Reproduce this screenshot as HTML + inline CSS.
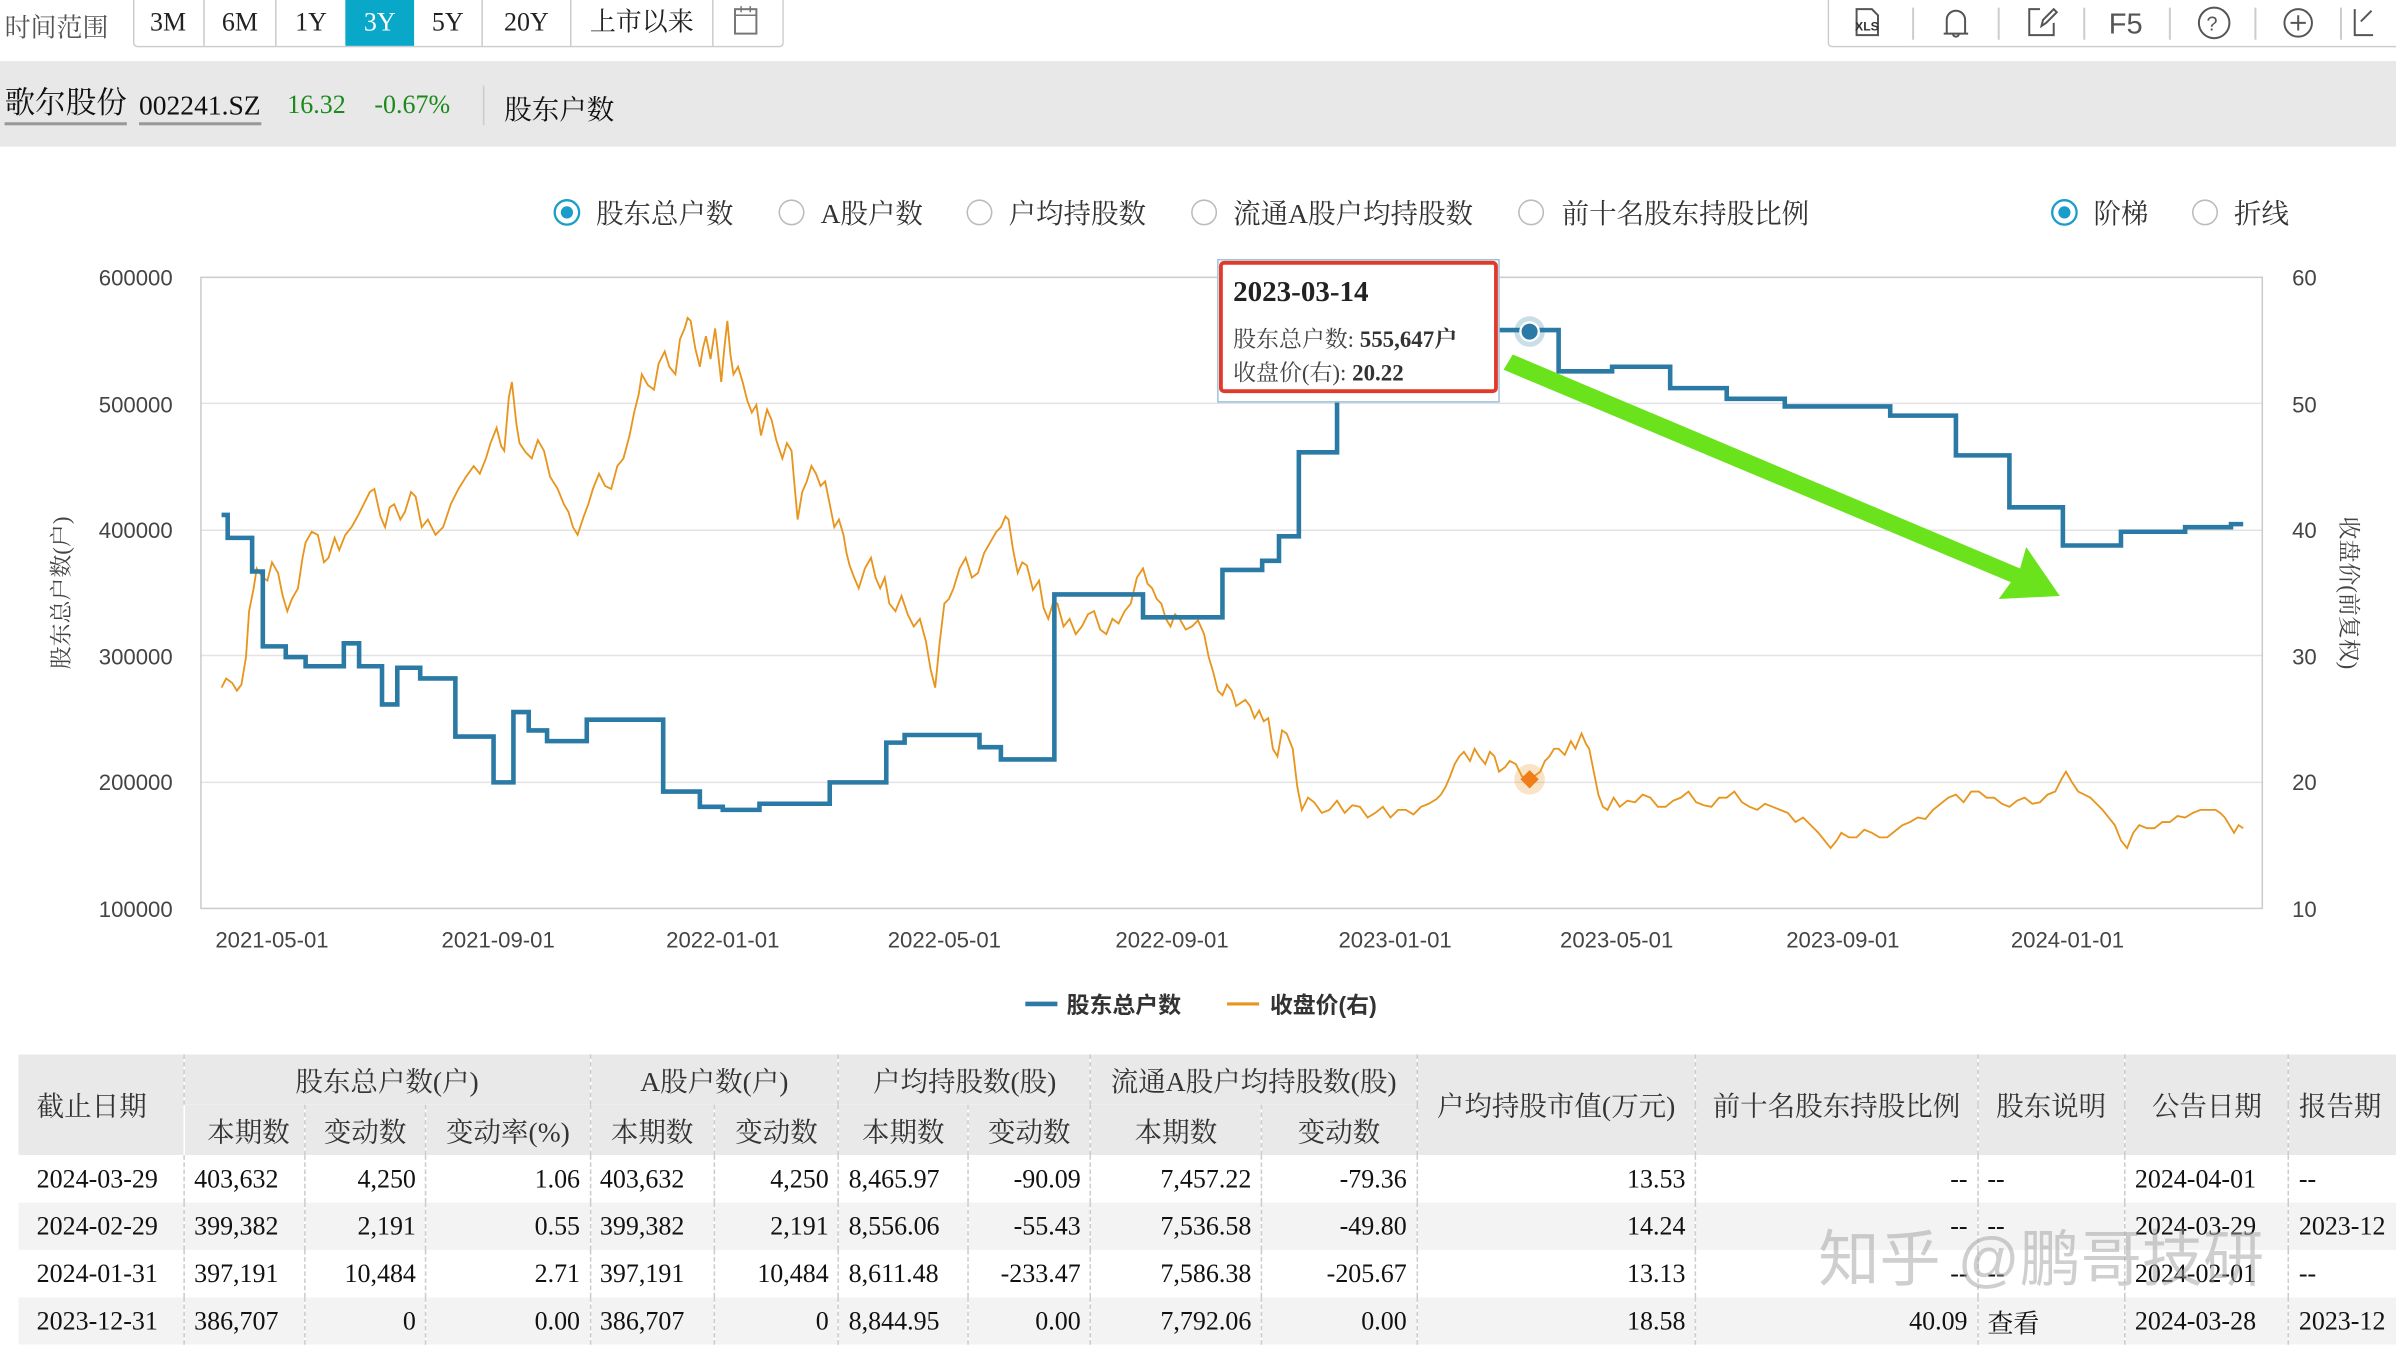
<!DOCTYPE html>
<html><head><meta charset="utf-8"><style>
html,body{margin:0;padding:0;background:#fff;overflow:hidden}
#w{position:absolute;left:0;top:0;width:1568px;height:876px;transform:scale(1.52806);transform-origin:0 0;font-family:"Liberation Serif","Noto Serif CJK SC",serif;color:#222}
.a{position:absolute;white-space:nowrap}
table{position:absolute;left:12px;top:690px;border-collapse:collapse;font-size:17px;table-layout:fixed;color:#111}
td{height:31px;padding:0 6px;border-left:1px dashed #ccc;white-space:nowrap;overflow:hidden}
td:first-child{border-left:none;padding-left:12px}
.h td{background:#e9e9e9;text-align:center;height:33px;font-size:18px;color:#333}
.r{text-align:right}
.g td{background:#f3f3f3}
</style></head><body><div id="w">
<div class="a" style="left:3px;top:4px;font-size:17px;color:#555">时间范围</div>
<div style="position:absolute;left:87px;top:0;width:424px;height:30px;border:1px solid #ccc;border-top:none;border-radius:0 0 3px 3px"></div>
<div class="a" style="left:87px;top:0;width:424px;height:30px;font-size:17px;line-height:30px">
<span class="a" style="left:0;width:46px;text-align:center">3M</span>
<span class="a" style="left:46px;width:46px;text-align:center;border-left:1px solid #ccc">6M</span>
<span class="a" style="left:93px;width:45px;text-align:center;border-left:1px solid #ccc">1Y</span>
<span class="a" style="left:139px;width:45px;text-align:center;background:#0aa8c8;color:#fff">3Y</span>
<span class="a" style="left:184px;width:44px;text-align:center">5Y</span>
<span class="a" style="left:228px;width:57px;text-align:center;border-left:1px solid #ccc">20Y</span>
<span class="a" style="left:286px;width:92px;text-align:center;border-left:1px solid #ccc">上市以来</span>
<span class="a" style="left:379px;width:44px;height:30px;border-left:1px solid #ccc"><svg width="44" height="30"><rect x="14" y="6" width="14" height="16" fill="none" stroke="#777" stroke-width="1.3"/><line x1="14" y1="10" x2="28" y2="10" stroke="#777"/><line x1="18" y1="4" x2="18" y2="8" stroke="#777"/><line x1="24" y1="4" x2="24" y2="8" stroke="#777"/></svg></span>
</div>
<div style="position:absolute;left:1196px;top:0;width:380px;height:30px;border:1px solid #ccc;border-top:none;border-radius:0 0 3px 3px"></div>
<svg class="a" style="left:1196px;top:0" width="372" height="30" fill="none" stroke="#555" stroke-width="1.3">
<path d="M19 6h10l4 4v13H19z"/><text x="18" y="20" font-size="8" font-family="Liberation Sans" fill="#333" stroke="none" font-weight="bold">XLS</text>
<line x1="56" y1="5" x2="56" y2="26" stroke="#ccc"/>
<path d="M78 22v-9a6 6 0 0 1 12 0v9zM76 22h16M82 22a2 2 0 0 0 4 0"/>
<line x1="112" y1="5" x2="112" y2="26" stroke="#ccc"/>
<path d="M139 6h-7v17h16v-8M140 17l1-4 7-7 2 2-7 7z"/>
<line x1="168" y1="5" x2="168" y2="26" stroke="#ccc"/>
<text x="184" y="22" font-size="19" font-family="Liberation Sans" fill="#555" stroke="none">F5</text>
<line x1="224" y1="5" x2="224" y2="26" stroke="#ccc"/>
<circle cx="253" cy="15" r="10"/><text x="248" y="20" font-size="13" font-family="Liberation Sans" fill="#555" stroke="none">?</text>
<line x1="280" y1="5" x2="280" y2="26" stroke="#ccc"/>
<circle cx="308" cy="15" r="9"/><path d="M308 10v10M303 15h10"/>
<line x1="336" y1="5" x2="336" y2="26" stroke="#ccc"/>
<path d="M345 6v17h12M349 14l7-7"/>
</svg>
<div style="position:absolute;left:0;top:40px;width:1568px;height:56px;background:#e8e8e8"></div>
<div class="a" style="left:3px;top:56px;font-size:20px;color:#111;border-bottom:2px solid #999;line-height:24px">歌尔股份</div>
<div class="a" style="left:91px;top:58px;font-size:18px;color:#111;border-bottom:2px solid #999;line-height:22px">002241.SZ</div>
<div class="a" style="left:188px;top:59px;font-size:17px;color:#1a8a1a">16.32</div>
<div class="a" style="left:245px;top:59px;font-size:17px;color:#1a8a1a">-0.67%</div>
<div style="position:absolute;left:316px;top:56px;width:1px;height:26px;background:#ccc"></div>
<div class="a" style="left:330px;top:58px;font-size:18px;color:#111">股东户数</div>
<svg class="a" style="left:0;top:100px" width="1568" height="580" font-family="Liberation Serif,Noto Serif CJK SC,serif">
<g font-size="18" fill="#333">
<circle cx="371" cy="39" r="8" fill="none" stroke="#1a9dc8" stroke-width="1.5"/><circle cx="371" cy="39" r="4" fill="#1a9dc8"/><text x="390" y="46">股东总户数</text>
<circle cx="518" cy="39" r="8" fill="none" stroke="#bbb"/><text x="537" y="46">A股户数</text>
<circle cx="641" cy="39" r="8" fill="none" stroke="#bbb"/><text x="660" y="46">户均持股数</text>
<circle cx="788" cy="39" r="8" fill="none" stroke="#bbb"/><text x="807" y="46">流通A股户均持股数</text>
<circle cx="1002" cy="39" r="8" fill="none" stroke="#bbb"/><text x="1022" y="46">前十名股东持股比例</text>
<circle cx="1351" cy="39" r="8" fill="none" stroke="#1a9dc8" stroke-width="1.5"/><circle cx="1351" cy="39" r="4" fill="#1a9dc8"/><text x="1370" y="46">阶梯</text>
<circle cx="1443" cy="39" r="8" fill="none" stroke="#bbb"/><text x="1462" y="46">折线</text>
</g>
<g transform="translate(0,-100)">
<g stroke="#e3e3e3" stroke-width="1"><line x1="131" y1="264" x2="1481" y2="264"/><line x1="131" y1="347" x2="1481" y2="347"/><line x1="131" y1="429" x2="1481" y2="429"/><line x1="131" y1="512" x2="1481" y2="512"/></g>
<rect x="131.5" y="181.5" width="1349" height="413" fill="none" stroke="#ccc"/>
<g font-family="Liberation Sans,sans-serif" font-size="14.5" fill="#444" text-anchor="end">
<text x="113" y="187">600000</text><text x="113" y="270">500000</text><text x="113" y="352">400000</text><text x="113" y="435">300000</text><text x="113" y="517">200000</text><text x="113" y="600">100000</text></g>
<g font-family="Liberation Sans,sans-serif" font-size="14.5" fill="#444">
<text x="1500" y="187">60</text><text x="1500" y="270">50</text><text x="1500" y="352">40</text><text x="1500" y="435">30</text><text x="1500" y="517">20</text><text x="1500" y="600">10</text></g>
<g font-family="Liberation Sans,sans-serif" font-size="14.5" fill="#444" text-anchor="middle">
<text x="178" y="620">2021-05-01</text><text x="326" y="620">2021-09-01</text><text x="473" y="620">2022-01-01</text><text x="618" y="620">2022-05-01</text><text x="767" y="620">2022-09-01</text><text x="913" y="620">2023-01-01</text><text x="1058" y="620">2023-05-01</text><text x="1206" y="620">2023-09-01</text><text x="1353" y="620">2024-01-01</text></g>
<text transform="translate(45,388) rotate(-90)" font-size="15" fill="#444" text-anchor="middle">股东总户数(户)</text>
<text transform="translate(1532,388) rotate(90)" font-size="15" fill="#444" text-anchor="middle">收盘价(前复权)</text>
<polyline fill="none" stroke="#e8951e" stroke-width="1.2" points="145,450 148,444 152,447 155,452 158,448 161,430 163,400 166,385 168,372 172,378 175,380 178,368 182,375 185,390 188,400 191,392 195,385 198,365 200,355 204,348 208,350 212,368 215,365 219,352 222,360 226,350 230,345 234,338 238,330 242,322 245,320 249,338 252,345 255,332 258,330 262,340 265,335 269,322 272,325 276,345 280,340 285,350 290,345 295,330 300,320 305,312 310,305 314,310 318,300 321,290 325,280 328,292 330,295 333,260 335,250 338,278 340,290 344,296 348,300 352,288 356,295 360,312 365,320 369,330 372,335 375,345 378,350 382,338 385,330 388,320 392,310 396,318 400,320 404,305 408,300 412,285 415,270 418,258 420,245 424,252 428,255 431,238 435,230 438,240 442,245 445,222 448,215 450,208 452,210 455,228 458,240 460,228 462,220 465,235 468,215 470,232 472,250 474,228 476,210 478,232 480,245 483,240 486,250 489,262 492,270 495,265 498,285 502,268 505,275 508,288 512,300 515,290 518,295 520,318 522,340 525,322 528,315 531,305 534,310 537,318 540,315 543,330 546,345 549,340 552,350 554,362 556,370 559,378 562,385 566,372 570,365 573,378 576,385 579,378 582,395 586,400 590,390 594,402 598,410 602,405 606,420 609,438 612,450 615,420 618,395 621,392 624,385 628,372 632,365 636,378 640,375 644,362 648,355 652,348 655,345 658,338 660,340 663,360 666,375 669,368 672,370 676,386 680,380 683,398 686,405 689,395 692,395 696,410 700,405 704,415 708,410 712,402 716,400 720,412 724,415 728,405 732,408 736,400 740,395 744,378 748,372 751,382 754,385 757,392 760,395 763,405 766,410 769,402 772,405 776,412 780,410 784,406 788,415 791,430 794,440 797,452 800,455 803,448 806,452 809,462 812,460 815,458 818,462 821,470 824,465 827,472 830,470 833,490 836,495 839,478 842,480 844,485 846,490 849,515 852,530 856,522 860,525 865,532 870,530 875,524 880,532 885,527 890,528 895,535 900,532 905,528 910,535 915,530 920,530 925,533 930,528 935,526 940,523 943,520 946,515 949,508 952,500 955,495 958,492 962,498 965,490 968,495 972,500 975,492 978,495 981,505 985,502 988,498 992,500 996,508 1000,510 1004,508 1008,505 1011,498 1014,495 1017,490 1020,490 1024,494 1028,485 1031,490 1035,480 1038,487 1040,490 1043,505 1046,520 1049,528 1052,530 1056,522 1060,528 1065,524 1070,525 1075,520 1080,522 1085,528 1090,528 1095,524 1100,522 1105,518 1110,525 1115,527 1120,528 1125,522 1130,522 1135,518 1140,525 1145,528 1150,530 1155,526 1160,528 1165,530 1170,532 1175,538 1180,535 1185,540 1190,545 1194,550 1198,555 1202,550 1205,545 1210,548 1215,548 1220,543 1225,545 1230,548 1235,548 1240,544 1245,540 1250,538 1255,535 1260,536 1265,530 1270,526 1275,522 1280,520 1285,525 1290,518 1295,518 1300,522 1305,522 1310,526 1315,528 1320,524 1325,522 1330,526 1335,525 1340,520 1345,518 1349,510 1352,505 1356,512 1360,518 1364,520 1368,522 1372,526 1376,530 1380,535 1384,540 1388,550 1392,555 1396,545 1400,540 1405,542 1410,542 1415,538 1420,538 1425,534 1430,535 1435,532 1440,530 1445,530 1450,530 1453,532 1456,535 1459,540 1462,545 1465,540 1468,542"/>
<path fill="none" stroke="#2a7aa5" stroke-width="3" d="M145 337H149V352H165V374H172V423H187V430H200V436H225V421H235V436H250V461H260V437H275V444H298V482H323V512H336V466H346V478H358V485H384V471H434V518H458V528H473V530H497V526H543V512H580V486H592V481H641V489H655V497H690V389H748V404H800V373H826V367H837V351H850V296H875V250H960V232H978V216H1020V243H1055V240H1093V254H1130V261H1168V266H1237V272H1280V298H1315V332H1350V357H1388V348H1430V345H1460V343H1468"/>
<circle cx="1001" cy="217" r="10" fill="#2a7aa5" fill-opacity="0.25"/><circle cx="1001" cy="217" r="6" fill="#2a7aa5" stroke="#fff" stroke-width="1.5"/>
<circle cx="1001" cy="510" r="10" fill="#e8951e" fill-opacity="0.25"/><path d="M1001 504l6 6-6 6-6-6z" fill="#f07d1a"/>
<path d="M990 232L1322 372L1326 358L1348 390L1308 392L1316 381L984 242z" fill="#6ae21c"/>
<rect x="797" y="170" width="184" height="93" fill="#fff" stroke="#9ec3da"/>
<rect x="799" y="172" width="180" height="84" fill="#fff" stroke="#e23a2a" stroke-width="2.5" rx="2"/>
<text x="807" y="197" font-size="19" font-weight="bold" fill="#222">2023-03-14</text>
<text x="807" y="227" font-size="15" fill="#444">股东总户数:  <tspan font-weight="bold" fill="#333">555,647户</tspan></text>
<text x="807" y="249" font-size="15" fill="#444">收盘价(右):  <tspan font-weight="bold" fill="#333">20.22</tspan></text>
<line x1="671" y1="657" x2="692" y2="657" stroke="#2a7aa5" stroke-width="3"/>
<text x="698" y="663" font-family="Liberation Sans,Noto Sans CJK SC,sans-serif" font-size="15" font-weight="bold" fill="#333">股东总户数</text>
<line x1="803" y1="657" x2="824" y2="657" stroke="#e8951e" stroke-width="2"/>
<text x="831" y="663" font-family="Liberation Sans,Noto Sans CJK SC,sans-serif" font-size="15" font-weight="bold" fill="#333">收盘价(右)</text>
</g></svg>
<table>
<colgroup><col style="width:109px"><col style="width:79px"><col style="width:80px"><col style="width:108px"><col style="width:82px"><col style="width:82px"><col style="width:85px"><col style="width:81px"><col style="width:112px"><col style="width:102px"><col style="width:183px"><col style="width:185px"><col style="width:97px"><col style="width:108px"><col style="width:70px"></colgroup>
<tr class="h"><td rowspan="2" style="text-align:left">截止日期</td><td colspan="3">股东总户数(户)</td><td colspan="2">A股户数(户)</td><td colspan="2">户均持股数(股)</td><td colspan="2">流通A股户均持股数(股)</td><td rowspan="2">户均持股市值(万元)</td><td rowspan="2">前十名股东持股比例</td><td rowspan="2">股东说明</td><td rowspan="2">公告日期</td><td rowspan="2" style="text-align:left">报告期</td></tr>
<tr class="h"><td>本期数</td><td>变动数</td><td>变动率(%)</td><td>本期数</td><td>变动数</td><td>本期数</td><td>变动数</td><td>本期数</td><td>变动数</td></tr>
<tr><td>2024-03-29</td><td>403,632</td><td class="r">4,250</td><td class="r">1.06</td><td>403,632</td><td class="r">4,250</td><td>8,465.97</td><td class="r">-90.09</td><td class="r">7,457.22</td><td class="r">-79.36</td><td class="r">13.53</td><td class="r">--</td><td>--</td><td>2024-04-01</td><td>--</td></tr>
<tr class="g"><td>2024-02-29</td><td>399,382</td><td class="r">2,191</td><td class="r">0.55</td><td>399,382</td><td class="r">2,191</td><td>8,556.06</td><td class="r">-55.43</td><td class="r">7,536.58</td><td class="r">-49.80</td><td class="r">14.24</td><td class="r">--</td><td>--</td><td>2024-03-29</td><td>2023-12</td></tr>
<tr><td>2024-01-31</td><td>397,191</td><td class="r">10,484</td><td class="r">2.71</td><td>397,191</td><td class="r">10,484</td><td>8,611.48</td><td class="r">-233.47</td><td class="r">7,586.38</td><td class="r">-205.67</td><td class="r">13.13</td><td class="r">--</td><td>--</td><td>2024-02-01</td><td>--</td></tr>
<tr class="g"><td>2023-12-31</td><td>386,707</td><td class="r">0</td><td class="r">0.00</td><td>386,707</td><td class="r">0</td><td>8,844.95</td><td class="r">0.00</td><td class="r">7,792.06</td><td class="r">0.00</td><td class="r">18.58</td><td class="r">40.09</td><td>查看</td><td>2024-03-28</td><td>2023-12</td></tr>
</table>
<div class="a" style="left:1190px;top:792px;font-size:40px;color:rgba(160,160,160,0.5);font-family:'Liberation Sans','Noto Sans CJK SC',sans-serif">知乎 @鹏哥技研</div>
</div></body></html>
